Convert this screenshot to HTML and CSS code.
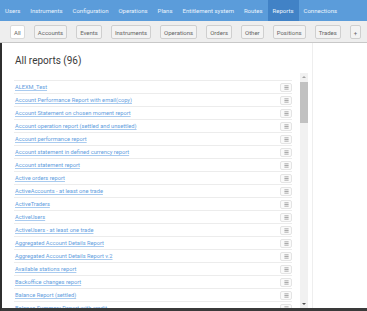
FILE: index.html
```html
<!DOCTYPE html>
<html lang="en">
<head>
  <meta charset="UTF-8">
  <title>All reports</title>
  <link rel="stylesheet" href="styles.css">
</head>
<body>
  <!-- top navigation -->
  <nav class="topnav">
    <a class="nav-item">Users</a>
    <a class="nav-item">Instruments</a>
    <a class="nav-item">Configuration</a>
    <a class="nav-item">Operations</a>
    <a class="nav-item">Plans</a>
    <a class="nav-item">Entitlement system</a>
    <a class="nav-item">Routes</a>
    <a class="nav-item active">Reports</a>
    <a class="nav-item">Connections</a>
  </nav>

  <!-- report category tabs -->
  <div class="tabs">
    <button class="tab active">All</button>
    <button class="tab">Accounts</button>
    <button class="tab">Events</button>
    <button class="tab">Instruments</button>
    <button class="tab">Operations</button>
    <button class="tab">Orders</button>
    <button class="tab">Other</button>
    <button class="tab">Positions</button>
    <button class="tab">Trades</button>
    <button class="tab">+</button>
  </div>

  <div class="main">
    <div class="panel">
      <h1 class="title">All reports (96)</h1>

      <div class="scroll-area">
        <ul class="report-list">
          <li class="report-row"><a href="#">ALEXM_Test</a><span class="row-menu"><svg viewBox="0 0 6 6"><path d="M0.5 1h5M0.5 3h5M0.5 5h5"/></svg></span></li>
          <li class="report-row"><a href="#">Account Performance Report with email(copy)</a><span class="row-menu"><svg viewBox="0 0 6 6"><path d="M0.5 1h5M0.5 3h5M0.5 5h5"/></svg></span></li>
          <li class="report-row"><a href="#">Account Statement on chosen moment report</a><span class="row-menu"><svg viewBox="0 0 6 6"><path d="M0.5 1h5M0.5 3h5M0.5 5h5"/></svg></span></li>
          <li class="report-row"><a href="#">Account operation report (settled and unsettled)</a><span class="row-menu"><svg viewBox="0 0 6 6"><path d="M0.5 1h5M0.5 3h5M0.5 5h5"/></svg></span></li>
          <li class="report-row"><a href="#">Account performance report</a><span class="row-menu"><svg viewBox="0 0 6 6"><path d="M0.5 1h5M0.5 3h5M0.5 5h5"/></svg></span></li>
          <li class="report-row"><a href="#">Account statement in defined currency report</a><span class="row-menu"><svg viewBox="0 0 6 6"><path d="M0.5 1h5M0.5 3h5M0.5 5h5"/></svg></span></li>
          <li class="report-row"><a href="#">Account statement report</a><span class="row-menu"><svg viewBox="0 0 6 6"><path d="M0.5 1h5M0.5 3h5M0.5 5h5"/></svg></span></li>
          <li class="report-row"><a href="#">Active orders report</a><span class="row-menu"><svg viewBox="0 0 6 6"><path d="M0.5 1h5M0.5 3h5M0.5 5h5"/></svg></span></li>
          <li class="report-row"><a href="#">ActiveAccounts - at least one trade</a><span class="row-menu"><svg viewBox="0 0 6 6"><path d="M0.5 1h5M0.5 3h5M0.5 5h5"/></svg></span></li>
          <li class="report-row"><a href="#">ActiveTraders</a><span class="row-menu"><svg viewBox="0 0 6 6"><path d="M0.5 1h5M0.5 3h5M0.5 5h5"/></svg></span></li>
          <li class="report-row"><a href="#">ActiveUsers</a><span class="row-menu"><svg viewBox="0 0 6 6"><path d="M0.5 1h5M0.5 3h5M0.5 5h5"/></svg></span></li>
          <li class="report-row"><a href="#">ActiveUsers - at least one trade</a><span class="row-menu"><svg viewBox="0 0 6 6"><path d="M0.5 1h5M0.5 3h5M0.5 5h5"/></svg></span></li>
          <li class="report-row"><a href="#">Aggregated Account Details Report</a><span class="row-menu"><svg viewBox="0 0 6 6"><path d="M0.5 1h5M0.5 3h5M0.5 5h5"/></svg></span></li>
          <li class="report-row"><a href="#">Aggregated Account Details Report v.2</a><span class="row-menu"><svg viewBox="0 0 6 6"><path d="M0.5 1h5M0.5 3h5M0.5 5h5"/></svg></span></li>
          <li class="report-row"><a href="#">Available stations report</a><span class="row-menu"><svg viewBox="0 0 6 6"><path d="M0.5 1h5M0.5 3h5M0.5 5h5"/></svg></span></li>
          <li class="report-row"><a href="#">Backoffice changes report</a><span class="row-menu"><svg viewBox="0 0 6 6"><path d="M0.5 1h5M0.5 3h5M0.5 5h5"/></svg></span></li>
          <li class="report-row"><a href="#">Balance Report (settled)</a><span class="row-menu"><svg viewBox="0 0 6 6"><path d="M0.5 1h5M0.5 3h5M0.5 5h5"/></svg></span></li>
          <li class="report-row"><a href="#">Balance Summary Report with credit</a><span class="row-menu"><svg viewBox="0 0 6 6"><path d="M0.5 1h5M0.5 3h5M0.5 5h5"/></svg></span></li>
        </ul>

        <!-- scrollbar -->
        <div class="scrollbar">
          <span class="sb-arrow up"></span>
          <span class="sb-thumb"></span>
          <span class="sb-track"></span>
          <span class="sb-arrow down"></span>
        </div>
      </div>
    </div>
  </div>
</body>
</html>
```

FILE: styles.css
```css
/* page */
html, body {
  height: 100%;
}

body {
  margin: 0;
  font-family: Roboto, "Liberation Sans", sans-serif;
  background: #ffffff;
  color: #333333;
  display: flex;
  flex-direction: column;
  overflow: hidden;
}

/* top navigation */
.topnav {
  display: flex;
  height: 21px;
  background: #5b9cda;
  flex-shrink: 0;
}

.nav-item {
  display: flex;
  align-items: center;
  padding: 0 5px;
  font-size: 6px;
  color: #eaf3fc;
  white-space: nowrap;
}

.nav-item.active {
  background: #4182c6;
}

/* category tabs */
.tabs {
  display: flex;
  gap: 9px;
  height: 22px;
  box-sizing: border-box;
  padding: 4px 0 0 10px;
  background: #eeeeee;
  border-bottom: 1px solid #c8c8c8;
  flex-shrink: 0;
}

.tab {
  height: 14px;
  padding: 0 3px;
  font-family: inherit;
  font-size: 6px;
  color: #666666;
  background: #f3f3f3;
  border: 1px solid #cfcfcf;
  border-radius: 2px;
}

.tab.active {
  background: #ffffff;
  border-color: #dadada;
}

/* main area */
.main {
  flex: 1;
  min-height: 0;
  display: flex;
  border-left: 2px solid #2f2f2f;
  border-bottom: 3px solid #3a3a3a;
}

.panel {
  width: 311px;
  display: flex;
  flex-direction: column;
  border-right: 1px solid #eeeeee;
  padding: 0 4px 0 12px;
  box-sizing: border-box;
}

.title {
  margin: 12px 0 6px 1px;
  font-size: 10px;
  font-weight: 400;
  color: #3a3a3a;
  line-height: 12px;
}

.scroll-area {
  flex: 1;
  min-height: 0;
  display: flex;
  gap: 8px;
}

/* report list */
.report-list {
  flex: 1;
  margin: 0;
  padding: 7px 0 0;
  list-style: none;
  overflow: hidden;
}

.report-row {
  display: flex;
  align-items: center;
  justify-content: space-between;
  height: 13px;
  box-sizing: border-box;
  border-top: 1px solid #ececec;
  padding-left: 1px;
}

.report-row a {
  font-size: 5.7px;
  color: #5f9ee0;
  text-decoration: underline;
  text-decoration-color: #a9cbef;
}

.row-menu {
  display: flex;
  align-items: center;
  justify-content: center;
  width: 12px;
  height: 9px;
  box-sizing: border-box;
  border: 1px solid #e4e4e4;
  border-radius: 2px;
  background: #fafafa;
}

.row-menu svg {
  width: 5px;
  height: 5px;
  stroke: #999999;
  stroke-width: 1;
  fill: none;
}

/* scrollbar */
.scrollbar {
  width: 8px;
  display: flex;
  flex-direction: column;
  background: #f1f1f1;
}

.sb-arrow {
  height: 8px;
  display: flex;
  align-items: center;
  justify-content: center;
}

.sb-arrow::before {
  content: "";
  border-left: 2px solid transparent;
  border-right: 2px solid transparent;
}

.sb-arrow.up::before {
  border-bottom: 2px solid #a3a3a3;
}

.sb-arrow.down::before {
  border-top: 2px solid #505050;
}

.sb-thumb {
  height: 41px;
  margin: 1px 0;
  background: #c1c1c1;
}

.sb-track {
  flex: 1;
}
```
